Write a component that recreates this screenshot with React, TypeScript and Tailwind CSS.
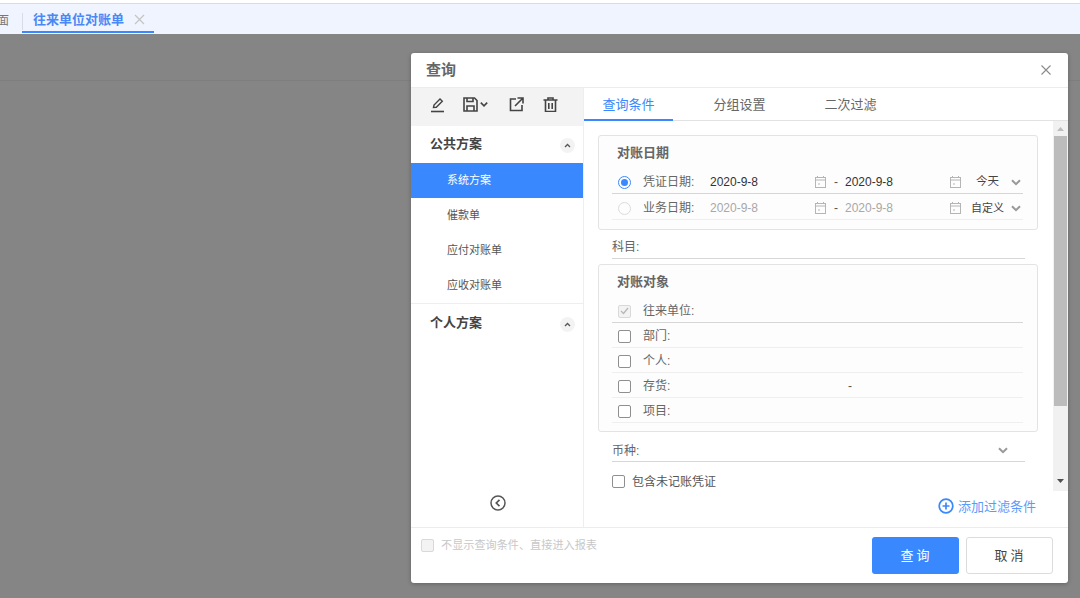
import React from "react";

const font = { fontFamily: '"Liberation Sans","Noto Sans CJK SC",sans-serif' };

function Cal({ className = "" }: { className?: string }) {
  return (
    <svg width="11" height="12" viewBox="0 0 11 12" className={className} fill="none" stroke="#b5b5b5" strokeWidth="1">
      <rect x="0.5" y="1.5" width="10" height="10" />
      <path d="M0.5 4h10M2.5 0v2M8.5 0v2" />
      <path d="M3 8h2" />
    </svg>
  );
}

function Chev({ className = "", color = "#999", w = 10 }: { className?: string; color?: string; w?: number }) {
  return (
    <svg width={w} height="7" viewBox="0 0 10 7" className={className} fill="none" stroke={color} strokeWidth="2">
      <path d="M1 1.2 5 5.2 9 1.2" />
    </svg>
  );
}

function Box({ disabled = false, checked = false }: { disabled?: boolean; checked?: boolean }) {
  return (
    <span className={`w-[13px] h-[13px] rounded-[2px] border flex items-center justify-center shrink-0 ${disabled ? "border-[#d9d9d9] bg-[#f3f3f3]" : "border-[#8f8f8f] bg-white"}`}>
      {checked && (
        <svg width="9" height="8" viewBox="0 0 9 8" fill="none" stroke="#b8b8b8" strokeWidth="1.3">
          <path d="M1 4 3.5 6.5 8 1" />
        </svg>
      )}
    </span>
  );
}

function DateRow({ active, label, value, mode, lineClass }: { active: boolean; label: string; value: string; mode: string; lineClass: string }) {
  const val = active ? "text-[#333]" : "text-[#a8a8a8]";
  return (
    <div className={`h-[26px] flex items-center border-b ${lineClass} w-[411px] ml-[13px] text-[12px] pt-[3px]`}>
      <span className={`w-[13px] h-[13px] ml-[6px] rounded-full border flex items-center justify-center shrink-0 ${active ? "border-[#3a88fd]" : "border-[#dcdcdc]"}`}>
        {active && <span className="w-[7px] h-[7px] rounded-full bg-[#3a88fd]" />}
      </span>
      <span className="ml-[12px] w-[67px] shrink-0 text-[#666]">{label}:</span>
      <span className={`w-[105px] shrink-0 ${val}`}>{value}</span>
      <Cal />
      <span className="ml-[8px] w-[11px] shrink-0 text-[#555]">-</span>
      <span className={`w-[105px] shrink-0 ${val}`}>{value}</span>
      <Cal />
      {mode === "今天" ? (
        <span className="w-[43px] shrink-0 text-right text-[#444] pr-[5px] text-[11.5px]">{mode}</span>
      ) : (
        <span className="w-[43px] shrink-0 text-right text-[#444] text-[11px]">{mode}</span>
      )}
      <Chev className="ml-[7px]" />
    </div>
  );
}

function ObjRow({ label, first, disabled, extra }: { label: string; first?: boolean; disabled?: boolean; extra?: boolean }) {
  return (
    <div className={`h-[25px] flex items-center w-[411px] ml-[13px] border-b text-[12px] text-[#666] pt-[2px] ${first ? "border-[#d6d6d6]" : "border-[#efefef]"}`}>
      <span className="ml-[6px]"><Box disabled={disabled} checked={disabled} /></span>
      <span className="ml-[12px] w-[204px]">{label}:</span>
      {extra && <span className="text-[#555] ml-[1px]">-</span>}
    </div>
  );
}

function Collapse() {
  return (
    <span className="w-[15px] h-[15px] rounded-full bg-[#f3f3f3] flex items-center justify-center mt-[3px]">
      <svg width="7" height="5" viewBox="0 0 7 5" fill="none" stroke="#555" strokeWidth="1.3"><path d="M1 4 3.5 1.5 6 4" /></svg>
    </span>
  );
}

function SchemeItem({ label, active }: { label: string; active?: boolean }) {
  return (
    <div className={`h-[35px] pl-[36px] flex items-center text-[11px] ${active ? "bg-[#3a88fd] text-white" : "text-[#555]"}`}>{label}</div>
  );
}

export default function App() {
  return (
    <div className="relative w-[1080px] h-[598px] overflow-hidden bg-[#858585]" style={font}>
      <div className="h-[3px] bg-white" />
      <div className="h-[31px] bg-[#eff4ff] border-t border-[#dcdcdc] flex items-start">
        <div className="w-[22px] h-[30px] flex items-center justify-end overflow-hidden">
          <span className="text-[12px] text-[#777] whitespace-nowrap pr-[13px] pt-[3px]">面</span>
        </div>
        <div className="w-[132px] h-[29px] border-b-[2px] border-[#3a88fd] flex items-center pl-[11px] relative">
          <span className="absolute left-0 top-[9px] h-[17px] w-px bg-[#d8dce4]" />
          <span className="text-[13px] font-bold text-[#4a88f5] pt-[4px]">往来单位对账单</span>
          <svg width="11" height="11" viewBox="0 0 11 11" className="ml-[10px] mt-[3px]" fill="none" stroke="#c4c4c4" strokeWidth="1.2"><path d="M1 1 10 10M10 1 1 10" /></svg>
        </div>
      </div>
      <div className="h-[47px] border-b border-[#7e7e7e]" />

      <div className="absolute left-[411px] top-[53px] w-[657px] h-[530px] bg-white rounded-[3px] flex flex-col shadow-[0_1px_4px_rgba(0,0,0,0.25)]">
        <div className="h-[35px] shrink-0 flex items-center justify-between border-b border-[#ececec] pl-[15px] pr-[17px]">
          <span className="text-[15px] font-bold text-[#666]">查询</span>
          <svg width="10" height="10" viewBox="0 0 10 10" fill="none" stroke="#8a8a8a" strokeWidth="1.1"><path d="M0.5 0.5 9.5 9.5M9.5 0.5 0.5 9.5" /></svg>
        </div>

        <div className="h-[440px] shrink-0 flex border-b border-[#ececec]">
          <div className="w-[173px] shrink-0 border-r border-[#eeeeee] flex flex-col">
            <div className="h-[38px] bg-[#f3f3f3] flex items-center text-[#444] shrink-0 pb-[5px]">
              <svg width="15" height="16" viewBox="0 0 15 16" className="ml-[19px]" fill="none" stroke="#444" strokeWidth="1.4">
                <path d="M3.5 10.5 4 8l6-6 2.3 2.3-6 6z" />
                <path d="M1 14.5h13" strokeWidth="1.6" />
              </svg>
              <svg width="15" height="15" viewBox="0 0 15 15" className="ml-[18px]" fill="none" stroke="#444" strokeWidth="1.6">
                <path d="M1 1h10.5L14 3.5V14H1z" />
                <path d="M4 1v3.5h6V1M4 14V9h7v5" />
              </svg>
              <Chev className="ml-[2px]" color="#444" w={8} />
              <svg width="15" height="15" viewBox="0 0 15 15" className="ml-[21px]" fill="none" stroke="#444" strokeWidth="1.6">
                <path d="M7 2H1.5v11.5H13V8" />
                <path d="M6 9 13.5 1.5M8.5 1h5.5v5.5" />
              </svg>
              <svg width="15" height="15" viewBox="0 0 15 15" className="ml-[19px]" fill="none" stroke="#444" strokeWidth="1.6">
                <path d="M0.5 3h14M5 3V1h5v2M2.5 3v11.5h10V3M5.8 6v6M9.2 6v6" />
              </svg>
            </div>
            <div className="h-[37px] flex items-center justify-between pl-[19px] pr-[10px] pb-[2px] shrink-0">
              <span className="text-[13px] font-bold text-[#444]">公共方案</span>
              <span className="mr-[-2px]"><Collapse /></span>
            </div>
            <SchemeItem label="系统方案" active />
            <SchemeItem label="催款单" />
            <SchemeItem label="应付对账单" />
            <SchemeItem label="应收对账单" />
            <div className="h-[38px] border-t border-[#eeeeee] flex items-center justify-between pl-[19px] pr-[10px] shrink-0">
              <span className="text-[13px] font-bold text-[#444]">个人方案</span>
              <span className="mr-[-2px]"><Collapse /></span>
            </div>
            <div className="flex-1 flex items-end justify-center pb-[16px] pl-[1px]">
              <svg width="16" height="16" viewBox="0 0 16 16" fill="none" stroke="#555" strokeWidth="1.5">
                <circle cx="8" cy="8" r="7" />
                <path d="M9.5 4.8 6.3 8l3.2 3.2" strokeWidth="1.7" />
              </svg>
            </div>
          </div>

          <div className="flex-1 flex flex-col min-w-0">
            <div className="h-[33px] border-b border-[#e2e2e2] flex shrink-0 text-[13px]">
              <div className="w-[89px] h-[33px] border-b-[2px] border-[#3a88fd] flex items-center justify-center text-[#3a88fd] pt-[2px]">查询条件</div>
              <div className="ml-[22px] w-[89px] flex items-center justify-center text-[#666] pt-[2px]">分组设置</div>
              <div className="ml-[22px] w-[89px] flex items-center justify-center text-[#666] pt-[2px]">二次过滤</div>
            </div>
            <div className="flex-1 relative">
              <div className="absolute right-0 top-0 w-[15px] h-[370px] bg-[#f1f1f1] flex flex-col items-center">
                <svg width="7" height="4" viewBox="0 0 7 4" className="mt-[6px]" fill="#bdbdbd"><path d="M3.5 0 7 4H0z" /></svg>
                <div className="w-[13px] h-[270px] bg-[#bcbcbc] mt-[5px]" />
                <svg width="7" height="4" viewBox="0 0 7 4" className="mt-auto mb-[8px]" fill="#505050"><path d="M0 0h7L3.5 4z" /></svg>
              </div>

              <div className="w-[440px] ml-[14px] mt-[14px] h-[95px] border border-[#e3e3e3] rounded-[3px] bg-[#fdfdfd]">
                <div className="h-[32px] pt-[7px] pl-[18px] text-[13px] font-bold text-[#666]">对账日期</div>
                <DateRow active label="凭证日期" value="2020-9-8" mode="今天" lineClass="border-[#d6d6d6]" />
                <DateRow active={false} label="业务日期" value="2020-9-8" mode="自定义" lineClass="border-[#efefef]" />
              </div>

              <div className="h-[29px] w-[413px] ml-[28px] border-b border-[#d6d6d6] flex items-end pb-[2px] text-[12px] text-[#666]">科目:</div>

              <div className="w-[440px] ml-[14px] mt-[5px] h-[168px] border border-[#e3e3e3] rounded-[3px] bg-[#fdfdfd]">
                <div className="h-[33px] pt-[7px] pl-[18px] text-[13px] font-bold text-[#666]">对账对象</div>
                <ObjRow label="往来单位" first disabled />
                <ObjRow label="部门" />
                <ObjRow label="个人" />
                <ObjRow label="存货" extra />
                <ObjRow label="项目" />
              </div>

              <div className="h-[30px] w-[413px] ml-[28px] border-b border-[#d6d6d6] flex items-end justify-between pb-[1px] pr-[17px] text-[12px] text-[#666]">
                <span>币种:</span>
                <Chev className="mb-[6px]" />
              </div>

              <div className="h-[30px] ml-[28px] flex items-center gap-[7px] text-[12px] text-[#555] pt-[9px]">
                <Box />
                <span>包含未记账凭证</span>
              </div>

              <div className="absolute right-[32px] bottom-[11px] flex items-center gap-[4px] text-[13px] text-[#5c9bfb]">
                <svg width="16" height="16" viewBox="0 0 16 16" fill="none" stroke="#3a88fd" strokeWidth="1.7">
                  <circle cx="8" cy="8" r="6.8" />
                  <path d="M4.5 8h7M8 4.5v7" />
                </svg>
                <span>添加过滤条件</span>
              </div>
            </div>
          </div>
        </div>

        <div className="flex-1 relative flex items-start justify-between pl-[10px] pr-[15px]">
          <div className="flex items-center mt-[9px] gap-[7px] text-[11.15px] text-[#c8c8c8]">
            <Box disabled />
            <span>不显示查询条件、直接进入报表</span>
          </div>
          <div className="flex mt-[9px] gap-[7px]">
            <div className="w-[87px] h-[37px] bg-[#3a88fd] rounded-[3px] flex items-center justify-center text-white text-[13px] tracking-[3px] pl-[2px]">查询</div>
            <div className="w-[87px] h-[37px] bg-white border border-[#dcdcdc] rounded-[3px] flex items-center justify-center text-[#444] text-[13px] tracking-[3px] pl-[2px]">取消</div>
          </div>
        </div>
      </div>
    </div>
  );
}
